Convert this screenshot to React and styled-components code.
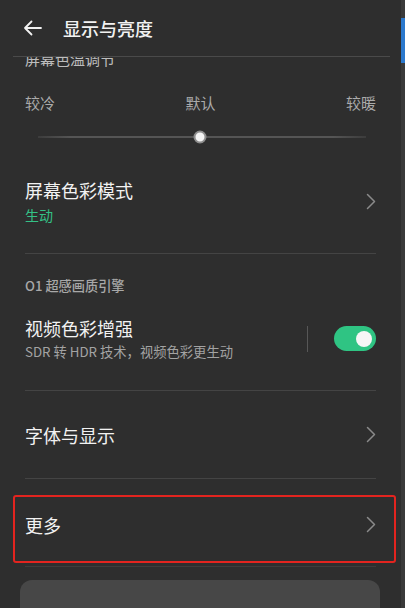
import React from 'react'
import styled, { createGlobalStyle } from 'styled-components'

const Global = createGlobalStyle`
    html, body {
        margin: 0;
        padding: 0;
        background: #2e2e2e;
    }
    body {
        font-family: "Noto Sans CJK SC", "Noto Sans", sans-serif;
        -webkit-font-smoothing: antialiased;
    }
`

const Screen = styled.div`
    width: 405px;
    height: 608px;
    overflow: hidden;
    display: flex;
    background: #2e2e2e;
`

const Main = styled.div`
    flex: 1;
    display: flex;
    flex-direction: column;
    min-width: 0;
`

const Edge = styled.div`
    width: 4px;
    background: linear-gradient(to bottom, #3a3a3a 0 18px, #2b78cc 18px 63px, #3a3a3a 63px);
`

const Header = styled.header`
    height: 56px;
    flex-shrink: 0;
    display: flex;
    align-items: center;
    gap: 21px;
    margin: 0 11px 0 13px;
    padding-left: 10px;
    border-bottom: 1px solid #4a4a4a;

    h1 {
        margin: 0;
        font-size: 18px;
        font-weight: 500;
        color: #f2f2f2;
    }
`

const ScrollArea = styled.div`
    flex: 1;
    overflow: hidden;
`

const Inner = styled.div`
    display: flex;
    flex-direction: column;
`

const CutLabel = styled.div`
    margin: -8px 0 0 25px;
    font-size: 15px;
    line-height: 20px;
    color: #bdbdbd;
`

const Ticks = styled.div`
    margin: 24px 25px 0;
    display: flex;
    justify-content: space-between;
    font-size: 15px;
    line-height: 20px;
    color: #ababab;
`

const Slider = styled.div`
    height: 14px;
    margin: 17px 35px 0 38px;
    position: relative;
    display: flex;
    align-items: center;

    &::before {
        content: '';
        flex: 1;
        height: 2px;
        background: linear-gradient(to right, #3c3c3c, #555 10%, #555 90%, #3c3c3c);
    }
`

const Thumb = styled.span`
    position: absolute;
    left: ${p => p.$pos}%;
    top: 50%;
    width: 9px;
    height: 9px;
    transform: translate(-50%, -50%);
    border-radius: 50%;
    background: #f4f4f4;
    border: 2px solid #8d8d8d;
`

const Row = styled.div`
    display: flex;
    align-items: center;
    margin: 0 25px;
    padding: ${p => p.$pad || '0'};
    min-height: ${p => p.$h || 0}px;
    border-bottom: ${p => (p.$line ? '1px solid #444' : 'none')};
`

const Texts = styled.div`
    flex: 1;
    display: flex;
    flex-direction: column;
    gap: ${p => p.$gap || 4}px;
`

const Title = styled.div`
    font-size: 18px;
    line-height: 24px;
    color: #f2f2f2;
`

const Sub = styled.div`
    line-height: 18px;
    color: ${p => p.$accent ? '#34c186' : '#a3a3a3'};
    font-size: ${p => p.$accent ? '14px' : '13.3px'};
`

const SectionLabel = styled.div`
    margin: 23px 25px 0;
    font-size: 13.2px;
    line-height: 18px;
    font-weight: 500;
    color: #a8a8a8;
`

const VLine = styled.span`
    width: 1px;
    height: 26px;
    background: #575757;
    margin-right: 26px;
`

const Toggle = styled.span`
    width: 42px;
    height: 25px;
    border-radius: 13px;
    background: #2fc483;
    position: relative;
    flex-shrink: 0;

    &::after {
        content: '';
        position: absolute;
        right: 4px;
        top: 4.5px;
        width: 16px;
        height: 16px;
        border-radius: 50%;
        background: #f6f6f6;
    }
`

const Highlight = styled.div`
    margin: 16px 5px 0 13px;
    height: 68px;
    box-sizing: border-box;
    border: 2px solid #e3241f;
    border-radius: 3px;
    display: flex;
    align-items: center;
    padding: 0 18px 9px 10px;
`

const Rule = styled.div`
    margin: 3px 25px 0;
    height: 1px;
    background: #3d3d3d;
`

const Card = styled.div`
    margin: 13px 21px 0 20px;
    height: 60px;
    border-radius: 12px;
    background: #474747;
`

const Back = () => (
    <svg width="19" height="16" viewBox="0 0 19 16" fill="none">
        <path d="M18 8H2M8.5 1.5L2 8l6.5 6.5" stroke="#f2f2f2" strokeWidth="1.8" strokeLinecap="round" strokeLinejoin="round" />
    </svg>
)

const Chevron = () => (
    <svg width="10" height="17" viewBox="0 0 10 17" fill="none">
        <path d="M1.5 1.5L8.5 8.5L1.5 15.5" stroke="#8a8a8a" strokeWidth="1.5" strokeLinecap="round" strokeLinejoin="round" />
    </svg>
)

const App = () => {
    return (
        <Screen>
            <Global />
            <Main>
                <Header>
                    <Back />
                    <h1>显示与亮度</h1>
                </Header>
                <ScrollArea>
                    <Inner>
                        <CutLabel>屏幕色温调节</CutLabel>
                        <Ticks>
                            <span>较冷</span>
                            <span>默认</span>
                            <span>较暖</span>
                        </Ticks>
                        <Slider>
                            <Thumb $pos={49.5} />
                        </Slider>
                        <Row $pad="34px 0 29px" $line>
                            <Texts $gap={4}>
                                <Title>屏幕色彩模式</Title>
                                <Sub $accent>生动</Sub>
                            </Texts>
                            <Chevron />
                        </Row>
                        <SectionLabel>O1 超感画质引擎</SectionLabel>
                        <Row $pad="21px 0 29px" $line>
                            <Texts $gap={3}>
                                <Title>视频色彩增强</Title>
                                <Sub>SDR 转 HDR 技术，视频色彩更生动</Sub>
                            </Texts>
                            <VLine />
                            <Toggle />
                        </Row>
                        <Row $h={87} $line>
                            <Texts>
                                <Title>字体与显示</Title>
                            </Texts>
                            <Chevron />
                        </Row>
                        <Highlight>
                            <Texts>
                                <Title>更多</Title>
                            </Texts>
                            <Chevron />
                        </Highlight>
                        <Rule />
                        <Card />
                    </Inner>
                </ScrollArea>
            </Main>
            <Edge />
        </Screen>
    )
}

export default App
